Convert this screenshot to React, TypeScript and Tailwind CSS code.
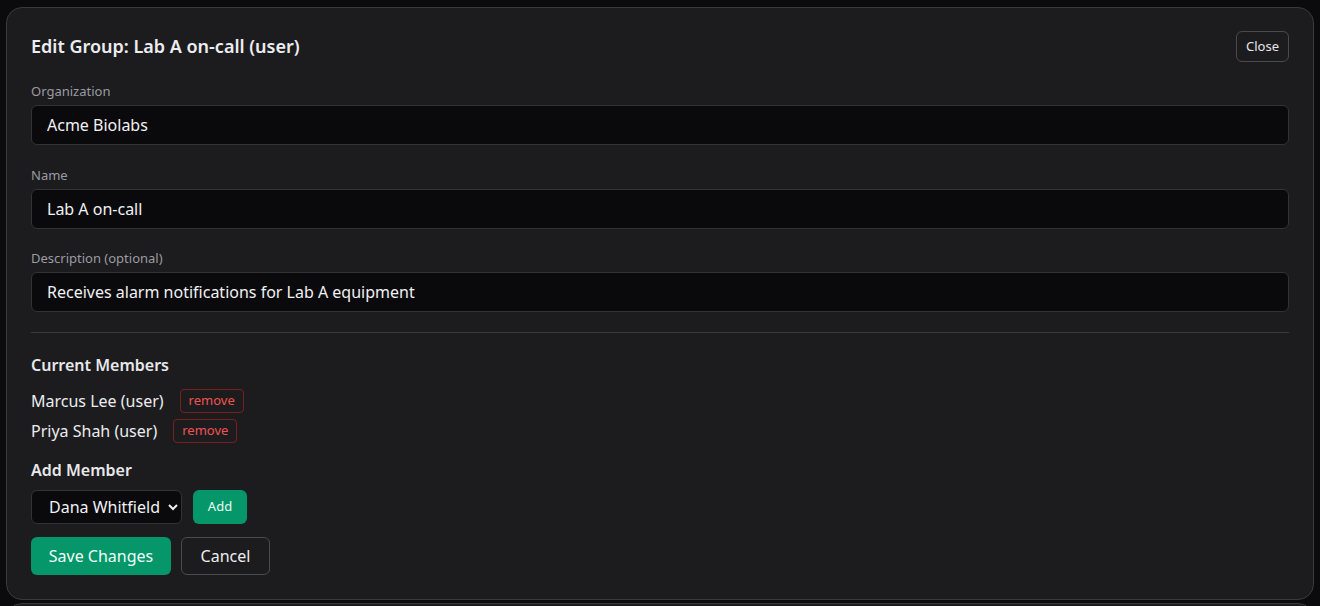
import { useState } from 'react';

const MEMBERS = [
  { id: 'm1', name: 'Marcus Lee', role: 'user' },
  { id: 'm2', name: 'Priya Shah', role: 'user' },
];

const CANDIDATES = ['Dana Whitfield', 'Omar Reyes', 'Helen Cho'];

function Field({ label, value, className }: { label: string; value: string; className: string }) {
  return (
    <div className={className}>
      <label className="block text-[13px] leading-[19px] text-[#9b9ba1] mb-[4px]">{label}</label>
      <input
        defaultValue={value}
        className="w-full h-10 px-[15px] rounded-md bg-[#0a0a0c] border border-[#333336] text-[16px] text-[#f1f1f3] outline-none"
      />
    </div>
  );
}

export default function App() {
  const [members, setMembers] = useState(MEMBERS);
  const [pick, setPick] = useState(CANDIDATES[0]);

  return (
    <div className="h-screen overflow-hidden bg-[#0b0b0d] px-[6px] pt-[7px] font-['Noto_Sans',sans-serif] text-[#ececee]">
      <div className="rounded-[16px] border border-[#3a3a3d] bg-[#1c1c1f] px-6 pt-[23px] pb-6">
        {/* Header */}
        <div className="flex items-center justify-between">
          <h2 className="text-[18px] font-semibold text-[#ededf0]">Edit Group: Lab A on-call (user)</h2>
          <button className="h-[31px] px-[9px] rounded-md border border-[#4a4a4e] text-[13px] text-[#e6e6e8]">
            Close
          </button>
        </div>

        <Field className="mt-5" label="Organization" value="Acme Biolabs" />
        <Field className="mt-[21px]" label="Name" value="Lab A on-call" />
        <Field className="mt-5" label="Description (optional)" value="Receives alarm notifications for Lab A equipment" />

        <div className="mt-5 border-t border-[#3a3a3d]" />

        {/* Current members */}
        <h3 className="mt-[21px] text-[16px] leading-[22px] font-semibold text-[#e8e8ea]">Current Members</h3>
        <div className="mt-[13px] flex flex-col gap-[6px]">
          {members.map(m => (
            <div key={m.id} className="flex items-center gap-4">
              <span className="text-[16px] text-[#ececee]">{m.name} ({m.role})</span>
              <button
                onClick={() => setMembers(members.filter(x => x.id !== m.id))}
                className="h-6 px-[8px] rounded border border-[#7a1f1f] text-[13px] text-[#ef5350]"
              >
                remove
              </button>
            </div>
          ))}
        </div>

        {/* Add member */}
        <h3 className="mt-4 text-[16px] leading-[22px] font-semibold text-[#e8e8ea]">Add Member</h3>
        <div className="mt-[9px] flex items-center gap-[11px]">
          <select
            value={pick}
            onChange={e => setPick(e.target.value)}
            className="h-[34px] w-[151px] pl-[13px] pr-1 rounded-md bg-[#0a0a0c] border border-[#333336] text-[16px] text-[#f1f1f3] outline-none [color-scheme:dark]"
          >
            {CANDIDATES.map(c => (
              <option key={c} value={c}>{c}</option>
            ))}
          </select>
          <button className="h-[34px] w-[54px] rounded-md bg-[#059669] text-[13px] text-[#eafff6]">Add</button>
        </div>

        <div className="mt-[13px] flex items-center gap-[10px]">
          <button className="h-[38px] w-[140px] rounded-md bg-[#059669] text-[16px] text-[#effff8]">Save Changes</button>
          <button className="h-[38px] w-[89px] rounded-md border border-[#4a4a4e] text-[16px] text-[#ececee]">Cancel</button>
        </div>
      </div>

      <div className="mt-[3px] h-10 rounded-[16px] border border-[#3a3a3d] bg-[#1c1c1f]" />
    </div>
  );
}
